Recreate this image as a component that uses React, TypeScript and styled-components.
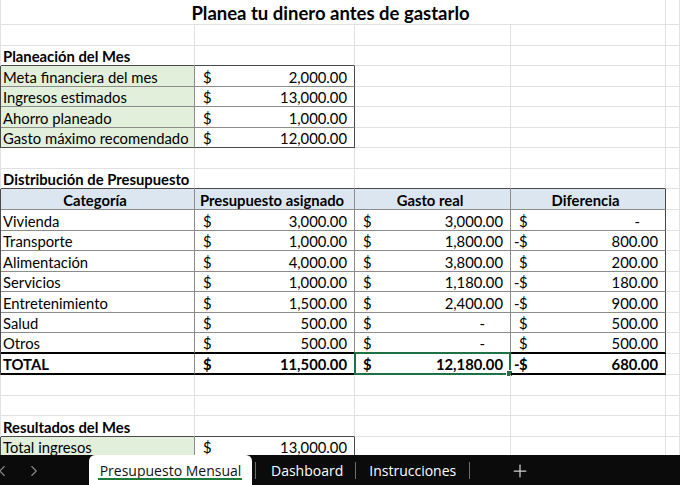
import React from 'react';
import styled, { createGlobalStyle } from 'styled-components';
import { ChevronLeft, ChevronRight, Plus } from 'lucide-react';

const Global = createGlobalStyle`
  html, body { margin: 0; padding: 0; background: #fff; }
  body { font-family: Lato, "Liberation Sans", sans-serif; color: #000; }
`;

type B = 'g' | 'd' | 'o' | 'k';
const LINE: Record<B, string> = {
  g: '1px solid #e1e1e1',
  d: '1px solid #8c8c8c',
  o: '1px solid #4a4a4a',
  k: '2px solid #000',
};

const GREEN = '#e2efda';
const BLUE = '#dce6f1';

const Page = styled.div`
  width: 680px;
  height: 485px;
  display: flex;
  flex-direction: column;
  overflow: hidden;
`;

const Sheet = styled.div`
  flex: 1;
  min-height: 0;
  overflow: hidden;
  display: flex;
  flex-direction: column;
`;

const Row = styled.div<{ $h: number; $edge?: B }>`
  flex-shrink: 0;
  display: grid;
  grid-template-columns: 194px 160px 156px 155px 1fr;
  height: ${(p) => p.$h}px;
  border-left: ${(p) => LINE[p.$edge ?? 'g']};
`;

const Cell = styled.div<{
  $r?: B;
  $b?: B;
  $fill?: string;
  $bold?: boolean;
  $center?: boolean;
  $span?: number;
}>`
  box-sizing: border-box;
  position: relative;
  min-width: 0;
  grid-column: span ${(p) => p.$span ?? 1};
  border-right: ${(p) => LINE[p.$r ?? 'g']};
  border-bottom: ${(p) => LINE[p.$b ?? 'g']};
  background: ${(p) => p.$fill ?? 'transparent'};
  font-weight: ${(p) => (p.$bold ? 700 : 400)};
  font-size: 14.8px;
  line-height: 17px;
  display: flex;
  align-items: flex-end;
  justify-content: ${(p) => (p.$center ? 'center' : 'flex-start')};
  padding: 0 7px 0 2px;
  white-space: nowrap;
`;

const TitleCell = styled(Cell)`
  font-size: 18.5px;
  font-weight: 700;
  line-height: 22px;
  align-items: center;
  padding-top: 2px;
`;

const MoneyBox = styled(Cell)`
  justify-content: space-between;
  padding-left: 8px;
`;

const Minus = styled.span`
  margin-left: -5px;
  display: inline-block;
  width: 5px;
`;

const Dash = styled.span`
  margin-right: 18px;
`;

const Selection = styled.div`
  position: absolute;
  left: -1px;
  top: -2px;
  right: -1px;
  bottom: -2px;
  border: 2px solid #1e7145;
  pointer-events: none;
  &::after {
    content: '';
    position: absolute;
    right: -4px;
    bottom: -4px;
    width: 5px;
    height: 5px;
    background: #1e7145;
    border: 1px solid #fff;
  }
`;

type MoneyProps = {
  v?: string;
  neg?: boolean;
  r?: B;
  b?: B;
  bold?: boolean;
  selected?: boolean;
};

const Money = ({ v, neg, r = 'd', b = 'd', bold, selected }: MoneyProps) => (
  <MoneyBox $r={r} $b={b} $bold={bold}>
    <span>
      {neg && <Minus>-</Minus>}$
    </span>
    {v ? <span>{v}</span> : <Dash>-</Dash>}
    {selected && <Selection />}
  </MoneyBox>
);

const Blank = ({ n, b }: { n: number; b?: B }) => (
  <>
    {Array.from({ length: n }).map((_, i) => (
      <Cell key={i} $b={b} />
    ))}
  </>
);

/* Tab bar */
const TabBar = styled.div`
  height: 30px;
  flex-shrink: 0;
  background: #0b0b0b;
  display: flex;
  align-items: stretch;
  font-family: "Open Sans", "Noto Sans", sans-serif;
  font-size: 14px;
  line-height: 20px;
  color: #fff;
  white-space: nowrap;
`;

const Nav = styled.div`
  width: 89px;
  flex-shrink: 0;
  display: flex;
  align-items: center;
  gap: 14px;
  padding-top: 2px;
  color: #8a8a8a;
  & > svg:first-child {
    margin-left: -7px;
  }
`;

const ActiveTab = styled.div`
  width: 163px;
  flex-shrink: 0;
  background: #fff;
  color: #111;
  border-radius: 6px 6px 0 0;
  display: flex;
  align-items: center;
  justify-content: center;
  padding-top: 2px;
  position: relative;
  &::after {
    content: '';
    position: absolute;
    left: 9px;
    right: 10px;
    bottom: 5px;
    height: 2px;
    background: #1e7a3c;
  }
`;

const Sep = styled.div<{ $ml?: number }>`
  width: 1px;
  height: 17px;
  flex-shrink: 0;
  align-self: center;
  background: #6e6e6e;
  margin-left: ${(p) => p.$ml ?? 0}px;
`;

const Tab = styled.div<{ $pl?: number; $pr?: number }>`
  display: flex;
  flex-shrink: 0;
  align-items: center;
  padding: 2px ${(p) => p.$pr ?? 14}px 0 ${(p) => p.$pl ?? 14}px;
`;

const AddBtn = styled.div`
  display: flex;
  align-items: center;
  margin-left: 40px;
  padding-top: 2px;
  color: #cfcfcf;
`;

const rowsData: { cat: string; p: string; g?: string; d?: string; neg?: boolean; h: number }[] = [
  { cat: 'Vivienda', p: '3,000.00', g: '3,000.00', d: undefined, h: 21 },
  { cat: 'Transporte', p: '1,000.00', g: '1,800.00', d: '800.00', neg: true, h: 20 },
  { cat: 'Alimentación', p: '4,000.00', g: '3,800.00', d: '200.00', h: 21 },
  { cat: 'Servicios', p: '1,000.00', g: '1,180.00', d: '180.00', neg: true, h: 20 },
  { cat: 'Entretenimiento', p: '1,500.00', g: '2,400.00', d: '900.00', neg: true, h: 21 },
  { cat: 'Salud', p: '500.00', g: undefined, d: '500.00', h: 20 },
  { cat: 'Otros', p: '500.00', g: undefined, d: '500.00', h: 21 },
];

const plan = [
  ['Meta financiera del mes', '2,000.00', 21],
  ['Ingresos estimados', '13,000.00', 20],
  ['Ahorro planeado', '1,000.00', 21],
  ['Gasto máximo recomendado', '12,000.00', 20],
] as const;

export default function App() {
  return (
    <Page>
      <Global />
      <Sheet>
        <Row $h={25}>
          <TitleCell $span={4} $center>Planea tu dinero antes de gastarlo</TitleCell>
          <Cell />
        </Row>
        <Row $h={21}>
          <Blank n={5} />
        </Row>
        <Row $h={20}>
          <Cell $bold $b="o">Planeación del Mes</Cell>
          <Cell $b="o" />
          <Blank n={3} />
        </Row>
        {plan.map(([label, v, h]) => (
          <Row key={label} $h={h} $edge="o">
            <Cell $fill={GREEN} $r="d" $b={label.startsWith('Gasto') ? 'o' : 'd'}>{label}</Cell>
            <Money v={v} r="o" b={label.startsWith('Gasto') ? 'o' : 'd'} />
            <Blank n={3} />
          </Row>
        ))}
        <Row $h={21}>
          <Blank n={5} />
        </Row>
        <Row $h={20}>
          <Cell $bold $b="o">Distribución de Presupuesto</Cell>
          <Blank n={3} b="o" />
          <Cell />
        </Row>
        <Row $h={21} $edge="o">
          <Cell $fill={BLUE} $bold $center $r="d" $b="d">Categoría</Cell>
          <Cell $fill={BLUE} $bold $center $r="d" $b="d">Presupuesto asignado</Cell>
          <Cell $fill={BLUE} $bold $center $r="d" $b="d">Gasto real</Cell>
          <Cell $fill={BLUE} $bold $center $r="o" $b="d">Diferencia</Cell>
          <Cell />
        </Row>
        {rowsData.map((r, i) => {
          const b: B = i === rowsData.length - 1 ? 'k' : 'd';
          return (
            <Row key={r.cat} $h={r.h} $edge="o">
              <Cell $r="d" $b={b}>{r.cat}</Cell>
              <Money v={r.p} b={b} />
              <Money v={r.g} b={b} />
              <Money v={r.d} neg={r.neg} r="o" b={b} />
              <Cell />
            </Row>
          );
        })}
        <Row $h={21} $edge="o">
          <Cell $bold $r="d" $b="k">TOTAL</Cell>
          <Money v="11,500.00" b="k" bold />
          <Money v="12,180.00" b="k" bold selected />
          <Money v="680.00" neg r="o" b="k" bold />
          <Cell />
        </Row>
        <Row $h={21}>
          <Blank n={5} />
        </Row>
        <Row $h={20}>
          <Blank n={5} />
        </Row>
        <Row $h={21}>
          <Cell $bold $b="o">Resultados del Mes</Cell>
          <Cell $b="o" />
          <Blank n={3} />
        </Row>
        <Row $h={20} $edge="o">
          <Cell $fill={GREEN} $r="d" $b="d">Total ingresos</Cell>
          <Money v="13,000.00" r="o" />
          <Blank n={3} />
        </Row>
      </Sheet>
      <TabBar>
        <Nav>
          <ChevronLeft size={18} strokeWidth={1.5} />
          <ChevronRight size={18} strokeWidth={1.5} />
        </Nav>
        <ActiveTab>Presupuesto Mensual</ActiveTab>
        <Sep $ml={3} />
        <Tab $pl={15} $pr={12}>Dashboard</Tab>
        <Sep />
        <Tab $pl={13} $pr={13}>Instrucciones</Tab>
        <Sep />
        <AddBtn>
          <Plus size={20} strokeWidth={1.5} />
        </AddBtn>
      </TabBar>
    </Page>
  );
}
